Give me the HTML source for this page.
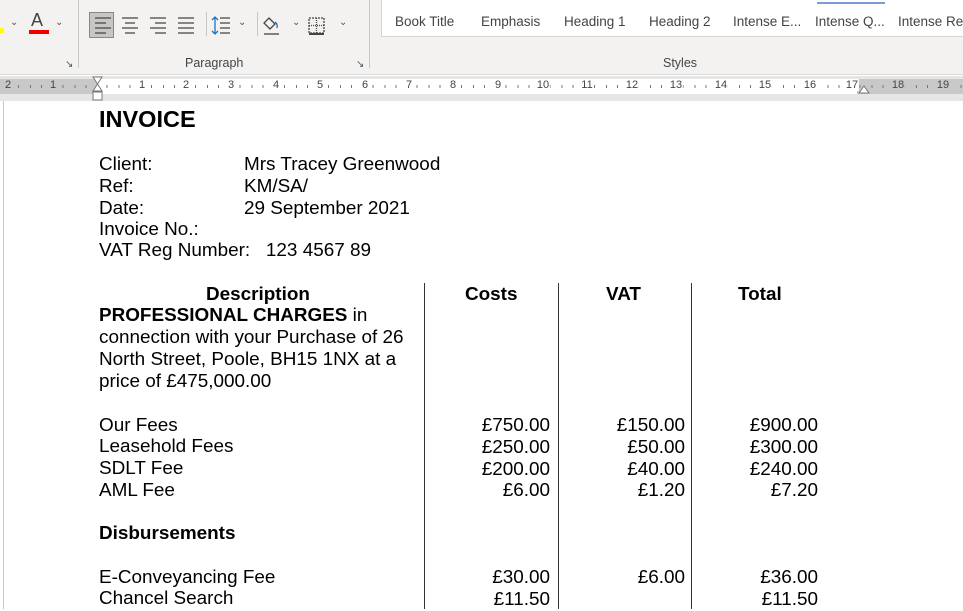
<!DOCTYPE html>
<html><head><meta charset="utf-8"><style>
*{margin:0;padding:0;box-sizing:border-box}
body{width:963px;height:609px;overflow:hidden;position:relative;background:#fff;font-family:"Liberation Sans",Arial,sans-serif}
#rib{position:absolute;left:0;top:0;width:963px;height:75px;background:#f3f2f1;border-bottom:1px solid #dadada}
.sep{position:absolute;width:1px;background:#c8c6c4}
.st{position:absolute;top:14px;font-size:13.5px;color:#444;white-space:nowrap}
.gl{position:absolute;top:56px;font-size:12.5px;color:#444}
#ruler{position:absolute;left:0;top:76px;width:963px;height:25px;background:#e6e6e6}
#rw{position:absolute;left:0;top:3px;height:15px;width:963px;background:#c8c8c8}
#rw2{position:absolute;left:97px;top:3px;height:15px;width:760px;background:#fff}
#ticks{position:absolute;left:8px;top:9px;height:3px;width:955px;background:repeating-linear-gradient(90deg,transparent 0,transparent 10px,#777 10px,#777 11px,transparent 11px,transparent 22px,#777 22px,#777 23px,transparent 23px,transparent 33px,#777 33px,#777 34px,transparent 34px,transparent 44.3px)}
.rn{position:absolute;top:3px;font-size:11px;color:#444;transform:translateX(-50%);background:inherit;padding:0 1px}
#page{position:absolute;left:3px;top:101px;width:960px;height:508px;background:#fff;border-left:1px solid #c8c8c8}
.t{position:absolute;font-size:18.9px;line-height:21.8px;color:#000;white-space:nowrap}
.b{font-weight:bold}
.r{text-align:right}
.vl{position:absolute;top:283px;height:326px;width:1px;background:#333}
</style></head><body>
<div id="rib">
 <div style="position:absolute;left:0;top:28px;width:4px;height:5px;background:#ff0"></div>
 <div style="position:absolute;left:10px;top:17px;font-size:10px;color:#555">⌄</div>
 <div style="position:absolute;left:31px;top:10px;font-size:18px;color:#444">A</div>
 <div style="position:absolute;left:29px;top:30px;width:20px;height:4px;background:#e00"></div>
 <div style="position:absolute;left:55px;top:17px;font-size:10px;color:#555">⌄</div>
 <div style="position:absolute;left:65px;top:59px;font-size:10px;color:#555">↘</div>
 <div class="sep" style="left:78px;top:0;height:68px"></div>
 <div style="position:absolute;left:89px;top:12px;width:25px;height:26px;background:#c8c6c4;border:1px solid #8a8886"></div>
 <svg style="position:absolute;left:92px;top:14px" width="240" height="22" stroke="#444" stroke-width="1.3" fill="none">
  <path d="M3 4h16M3 9h11M3 14h16M3 19h11"/>
  <path d="M30 4h16M33 9h10M30 14h16M33 19h10"/>
  <path d="M58 4h16M63 9h11M58 14h16M63 19h11"/>
  <path d="M86 4h16M86 9h16M86 14h16M86 19h16"/>
  <path d="M128 4h10M128 9h10M128 14h10M128 19h10"/>
  <path d="M123 3v17M120 6l3-3 3 3M120 17l3 3 3-3" stroke="#1a73c8"/>
  <path d="M177 4l6 6-5 5-6-6z"/><path d="M183 8q3 2 2 6" stroke="#1a73c8"/><path d="M172 20h15"/>
  <path d="M217 4h15v15h-15z" stroke-dasharray="2 1"/><path d="M224.5 4v15M217 11.5h15" stroke-dasharray="1 1"/><path d="M217 20h15" stroke-width="2"/>
 </svg>
 <div class="sep" style="left:206px;top:12px;height:24px"></div>
 <div class="sep" style="left:257px;top:12px;height:24px"></div>
 <div style="position:absolute;left:238px;top:17px;font-size:10px;color:#555">⌄</div>
 <div style="position:absolute;left:292px;top:17px;font-size:10px;color:#555">⌄</div>
 <div style="position:absolute;left:339px;top:17px;font-size:10px;color:#555">⌄</div>
 <div class="gl" style="left:185px">Paragraph</div>
 <div style="position:absolute;left:356px;top:59px;font-size:10px;color:#555">↘</div>
 <div class="sep" style="left:369px;top:0;height:68px"></div>
 <div style="position:absolute;left:381px;top:-1px;width:590px;height:38px;background:#fff;border:1px solid #d6d6d6"></div>
 <div style="position:absolute;left:817px;top:2px;width:68px;height:2px;background:#7a9cd6"></div>
 <div class="st" style="left:395px">Book Title</div>
 <div class="st" style="left:481px">Emphasis</div>
 <div class="st" style="left:564px">Heading 1</div>
 <div class="st" style="left:649px">Heading 2</div>
 <div class="st" style="left:733px">Intense E...</div>
 <div class="st" style="left:815px">Intense Q...</div>
 <div class="st" style="left:898px">Intense Re</div>
 <div class="gl" style="left:663px">Styles</div>
</div>
<div id="ruler">
 <div id="rw"></div><div id="rw2"></div><div id="ticks"></div>
 <div class="rn" style="left:8px;background:#c8c8c8">2</div><div class="rn" style="left:53px;background:#c8c8c8">1</div>
 <div class="rn" style="left:142px;background:#fff">1</div><div class="rn" style="left:186px;background:#fff">2</div><div class="rn" style="left:231px;background:#fff">3</div>
 <div class="rn" style="left:276px;background:#fff">4</div><div class="rn" style="left:320px;background:#fff">5</div><div class="rn" style="left:365px;background:#fff">6</div>
 <div class="rn" style="left:409px;background:#fff">7</div><div class="rn" style="left:453px;background:#fff">8</div><div class="rn" style="left:498px;background:#fff">9</div>
 <div class="rn" style="left:543px;background:#fff">10</div><div class="rn" style="left:587px;background:#fff">11</div><div class="rn" style="left:632px;background:#fff">12</div>
 <div class="rn" style="left:676px;background:#fff">13</div><div class="rn" style="left:721px;background:#fff">14</div><div class="rn" style="left:765px;background:#fff">15</div>
 <div class="rn" style="left:810px;background:#fff">16</div><div class="rn" style="left:852px;background:#fff">17</div><div class="rn" style="left:898px;background:#c8c8c8">18</div>
 <div class="rn" style="left:943px;background:#c8c8c8">19</div>
 <svg style="position:absolute;left:92px;top:0" width="12" height="25"><path d="M1 1h9L5.5 8zM5.5 8L1 15h9z M1 16h9v8H1z" fill="#fff" stroke="#777"/></svg>
 <svg style="position:absolute;left:858px;top:8px" width="12" height="10"><path d="M1 9L6 2l5 7z" fill="#fff" stroke="#777"/></svg>
</div>
<div id="page"></div>
<div class="t b" style="left:99px;top:106px;font-size:23.5px;line-height:26px">INVOICE</div>
<div class="t" style="left:99px;top:154px">Client:</div><div class="t" style="left:244px;top:154px">Mrs Tracey Greenwood</div>
<div class="t" style="left:99px;top:176px">Ref:</div><div class="t" style="left:244px;top:176px">KM/SA/</div>
<div class="t" style="left:99px;top:198px">Date:</div><div class="t" style="left:244px;top:198px">29 September 2021</div>
<div class="t" style="left:99px;top:219px">Invoice No.:</div>
<div class="t" style="left:99px;top:240px">VAT Reg Number:&nbsp;&nbsp; 123 4567 89</div>
<div class="vl" style="left:424px"></div><div class="vl" style="left:558px"></div><div class="vl" style="left:691px"></div>
<div class="t b" style="left:206px;top:284px">Description</div>
<div class="t b" style="left:465px;top:284px">Costs</div>
<div class="t b" style="left:606px;top:284px">VAT</div>
<div class="t b" style="left:738px;top:284px">Total</div>
<div class="t" style="left:99px;top:305px"><b>PROFESSIONAL CHARGES</b> in</div>
<div class="t" style="left:99px;top:327px">connection with your Purchase of 26</div>
<div class="t" style="left:99px;top:349px">North Street, Poole, BH15 1NX at a</div>
<div class="t" style="left:99px;top:371px">price of £475,000.00</div>
<div class="t" style="left:99px;top:415px">Our Fees</div>
<div class="t" style="left:99px;top:436px">Leasehold Fees</div>
<div class="t" style="left:99px;top:458px">SDLT Fee</div>
<div class="t" style="left:99px;top:480px">AML Fee</div>
<div class="t b" style="left:99px;top:523px">Disbursements</div>
<div class="t" style="left:99px;top:567px">E-Conveyancing Fee</div>
<div class="t" style="left:99px;top:588px">Chancel Search</div>
<div class="t r" style="left:430px;width:120px;top:415px">£750.00<br>£250.00<br>£200.00<br>£6.00</div>
<div class="t r" style="left:565px;width:120px;top:415px">£150.00<br>£50.00<br>£40.00<br>£1.20</div>
<div class="t r" style="left:698px;width:120px;top:415px">£900.00<br>£300.00<br>£240.00<br>£7.20</div>
<div class="t r" style="left:430px;width:120px;top:567px">£30.00<br>£11.50</div>
<div class="t r" style="left:565px;width:120px;top:567px">£6.00</div>
<div class="t r" style="left:698px;width:120px;top:567px">£36.00<br>£11.50</div>
</body></html>
